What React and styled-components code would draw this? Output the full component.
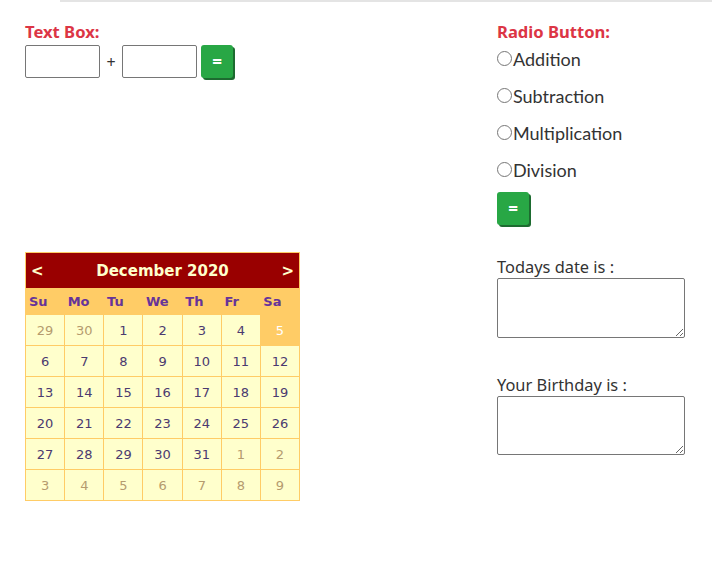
import React from "react";
import styled, { createGlobalStyle } from "styled-components";

const GlobalStyle = createGlobalStyle`
  body {
    margin: 0;
    background: #fff;
    font-family: "Noto Sans", "Open Sans", sans-serif;
    color: #212529;
  }
`;

const TopRule = styled.div`
  margin-left: 60px;
  height: 2px;
  background: #e4e4e4;
`;

const Page = styled.div`
  display: grid;
  grid-template-columns: 472px 1fr;
  padding: 20px 0 0 25px;
`;

const Column = styled.div`
  display: flex;
  flex-direction: column;
  align-items: flex-start;
`;

const Heading = styled.div`
  color: #dc3545;
  font-weight: 700;
  font-size: 16.6px;
  line-height: 20px;
  height: 21px;
`;

const InputRow = styled.div`
  display: flex;
  align-items: center;
  margin-top: 2px;
`;

const NumberBox = styled.input`
  box-sizing: border-box;
  width: 75px;
  height: 33px;
  border: 1px solid #767676;
  border-radius: 2px;
  padding: 0 4px;
  margin: 0;
`;

const Plus = styled.span`
  font-size: 16px;
  color: #333;
  width: 22px;
  text-align: center;
`;

const EqualsButton = styled.button`
  box-sizing: border-box;
  width: 32px;
  height: 33px;
  margin: ${(p) => p.$margin || "0"};
  border: none;
  border-radius: 3px;
  background: #28a745;
  color: #fff;
  font-weight: 700;
  font-size: 17px;
  font-family: "Noto Sans", sans-serif;
  box-shadow: 2px 2px 0 #1d6b30;
  padding: 0;
`;

const RadioList = styled.div`
  display: flex;
  flex-direction: column;
  margin-top: -3px;
`;

const RadioRow = styled.label`
  display: flex;
  align-items: center;
  height: 37px;
  font-family: Lato, "Noto Sans", sans-serif;
  font-size: 18px;
  color: #333;
`;

const Radio = styled.input`
  width: 15px;
  height: 15px;
  margin: 0 1px 0 0;
`;

const FieldLabel = styled.div`
  font-size: 16.4px;
  color: #333;
  line-height: 21px;
  margin-top: ${(p) => p.$top}px;
`;

const Area = styled.textarea`
  box-sizing: border-box;
  width: 188px;
  height: ${(p) => p.$h}px;
  border: 1px solid #767676;
  border-radius: 2px;
  margin: 1px 0 0;
`;

const Calendar = styled.table`
  margin-top: 174px;
  border-collapse: collapse;
  border: 1px solid #ffcc66;
  font-family: "DejaVu Sans", Verdana, sans-serif;
  font-size: 13px;
  color: #663399;
  width: 275px;
  background: #ffffcc;
`;

const TitleCell = styled.td`
  background: #990000;
  color: #ffffcc;
  font-weight: 700;
  height: 35px;
  padding: 0 5px;
`;

const TitleBar = styled.div`
  display: flex;
  justify-content: space-between;
  align-items: center;
  font-size: 15px;
`;

const DayHead = styled.th`
  background: #ffcc66;
  color: #663399;
  font-weight: 700;
  font-size: 13px;
  height: 26px;
  padding: 0 0 0 3px;
  text-align: left;
`;

const Day = styled.td`
  width: 39px;
  height: 30px;
  padding: 0;
  text-align: center;
  border: 1px solid #ffcc66;
  background: ${(p) => (p.$today ? "#ffcc66" : "#ffffcc")};
  color: ${(p) => (p.$today ? "#fff" : p.$other ? "#b59b6e" : "#4b3a70")};
`;

const weeks = [
  [29, 30, 1, 2, 3, 4, 5],
  [6, 7, 8, 9, 10, 11, 12],
  [13, 14, 15, 16, 17, 18, 19],
  [20, 21, 22, 23, 24, 25, 26],
  [27, 28, 29, 30, 31, 1, 2],
  [3, 4, 5, 6, 7, 8, 9],
];

const isOther = (w, d) => (w === 0 && d > 20) || (w >= 4 && d < 15);

export default function App() {
  return (
    <>
      <GlobalStyle />
      <TopRule />
      <Page>
        <Column>
          <Heading>Text Box:</Heading>
          <InputRow>
            <NumberBox />
            <Plus>+</Plus>
            <NumberBox />
            <EqualsButton $margin="0 0 0 4px">=</EqualsButton>
          </InputRow>
          <Calendar>
            <tbody>
              <tr>
                <TitleCell colSpan={7}>
                  <TitleBar>
                    <span>&lt;</span>
                    <span>December 2020</span>
                    <span>&gt;</span>
                  </TitleBar>
                </TitleCell>
              </tr>
              <tr>
                {["Su", "Mo", "Tu", "We", "Th", "Fr", "Sa"].map((d) => (
                  <DayHead key={d}>{d}</DayHead>
                ))}
              </tr>
              {weeks.map((week, w) => (
                <tr key={w}>
                  {week.map((d, i) => (
                    <Day key={i} $other={isOther(w, d)} $today={w === 0 && d === 5}>
                      {d}
                    </Day>
                  ))}
                </tr>
              ))}
            </tbody>
          </Calendar>
        </Column>
        <Column>
          <Heading>Radio Button:</Heading>
          <RadioList>
            {["Addition", "Subtraction", "Multiplication", "Division"].map((op) => (
              <RadioRow key={op}>
                <Radio type="radio" name="op" />
                {op}
              </RadioRow>
            ))}
          </RadioList>
          <EqualsButton $margin="4px 0 0 0">=</EqualsButton>
          <FieldLabel $top={31}>Todays date is :</FieldLabel>
          <Area $h={60} />
          <FieldLabel $top={36}>Your Birthday is :</FieldLabel>
          <Area $h={59} />
        </Column>
      </Page>
    </>
  );
}
